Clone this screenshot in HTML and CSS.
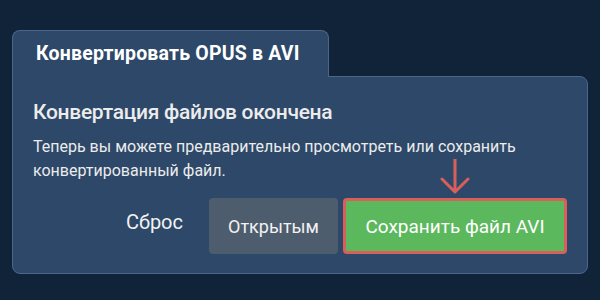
FILE: index.html
```html
<!DOCTYPE html>
<html lang="ru">
<head>
    <meta charset="UTF-8">
    <meta name="viewport" content="width=device-width, initial-scale=1.0">
    <link rel="stylesheet" href="styles.css">
</head>
<body>

    <div class="converter">
        <div class="tab">Конвертировать OPUS в AVI</div>

        <div class="panel">
            <h2>Конвертация файлов окончена</h2>
            <p>Теперь вы можете предварительно просмотреть или сохранить конвертированный файл.</p>

            <div class="actions">
                <button class="btn btn-reset">Сброс</button>
                <button class="btn btn-open">Открытым</button>
                <div class="save-wrap">
                    <svg class="arrow" width="30" height="36" viewBox="0 0 30 36">
                        <path d="M15 0 V33 M2 20 L15 33 L28 20" fill="none" stroke="#d9605a" stroke-width="3" stroke-linecap="round" stroke-linejoin="round"/>
                    </svg>
                    <button class="btn btn-save">Сохранить файл AVI</button>
                </div>
            </div>
        </div>
    </div>

</body>
</html>
```

FILE: styles.css
```css
body {
    margin: 0;
    background-color: #112339;
    font-family: Roboto, "Noto Sans", sans-serif;
    color: #e9ecef;
}

.converter {
    padding: 30px 12px 0 12px;
}

.tab {
    position: relative;
    z-index: 1;
    display: inline-block;
    box-sizing: border-box;
    width: 317px;
    height: 47px;
    margin-bottom: -1px;
    padding: 11px 0 0 23px;
    font-size: 19.5px;
    font-weight: 700;
    letter-spacing: 0.2px;
    color: #fff;
    background-color: #2d4868;
    border: 1px solid #4b6787;
    border-bottom: none;
    border-radius: 8px 8px 0 0;
}

.panel {
    background-color: #2d4868;
    border: 1px solid #4b6787;
    border-radius: 0 8px 8px 8px;
    padding: 21px 20px 19px 20px;
}

.panel h2 {
    margin: 0;
    font-size: 21px;
    line-height: 28px;
    font-weight: 500;
    letter-spacing: -0.3px;
    color: #ececec;
}

.panel p {
    margin: 9px 0 0 0;
    font-size: 16px;
    line-height: 24px;
    color: #ececec;
}

.actions {
    display: flex;
    justify-content: flex-end;
    align-items: center;
    gap: 5px;
    margin-top: 15px;
}

.btn {
    height: 56px;
    font-family: inherit;
    font-size: 18px;
    color: #f2f2f2;
    border: none;
    border-radius: 4px;
    cursor: pointer;
}

.btn-reset {
    background: none;
    padding: 0 21px;
    margin-top: -8px;
    font-size: 20px;
}

.btn-open {
    width: 129px;
    background-color: #4d5d6e;
}

.save-wrap {
    position: relative;
}

.arrow {
    position: absolute;
    left: 97px;
    bottom: 100%;
    margin-bottom: 3px;
}

.btn-save {
    width: 224px;
    background-color: #5cb85c;
    border: 3px solid #d9605a;
    font-size: 19px;
    color: #fff;
}
```
